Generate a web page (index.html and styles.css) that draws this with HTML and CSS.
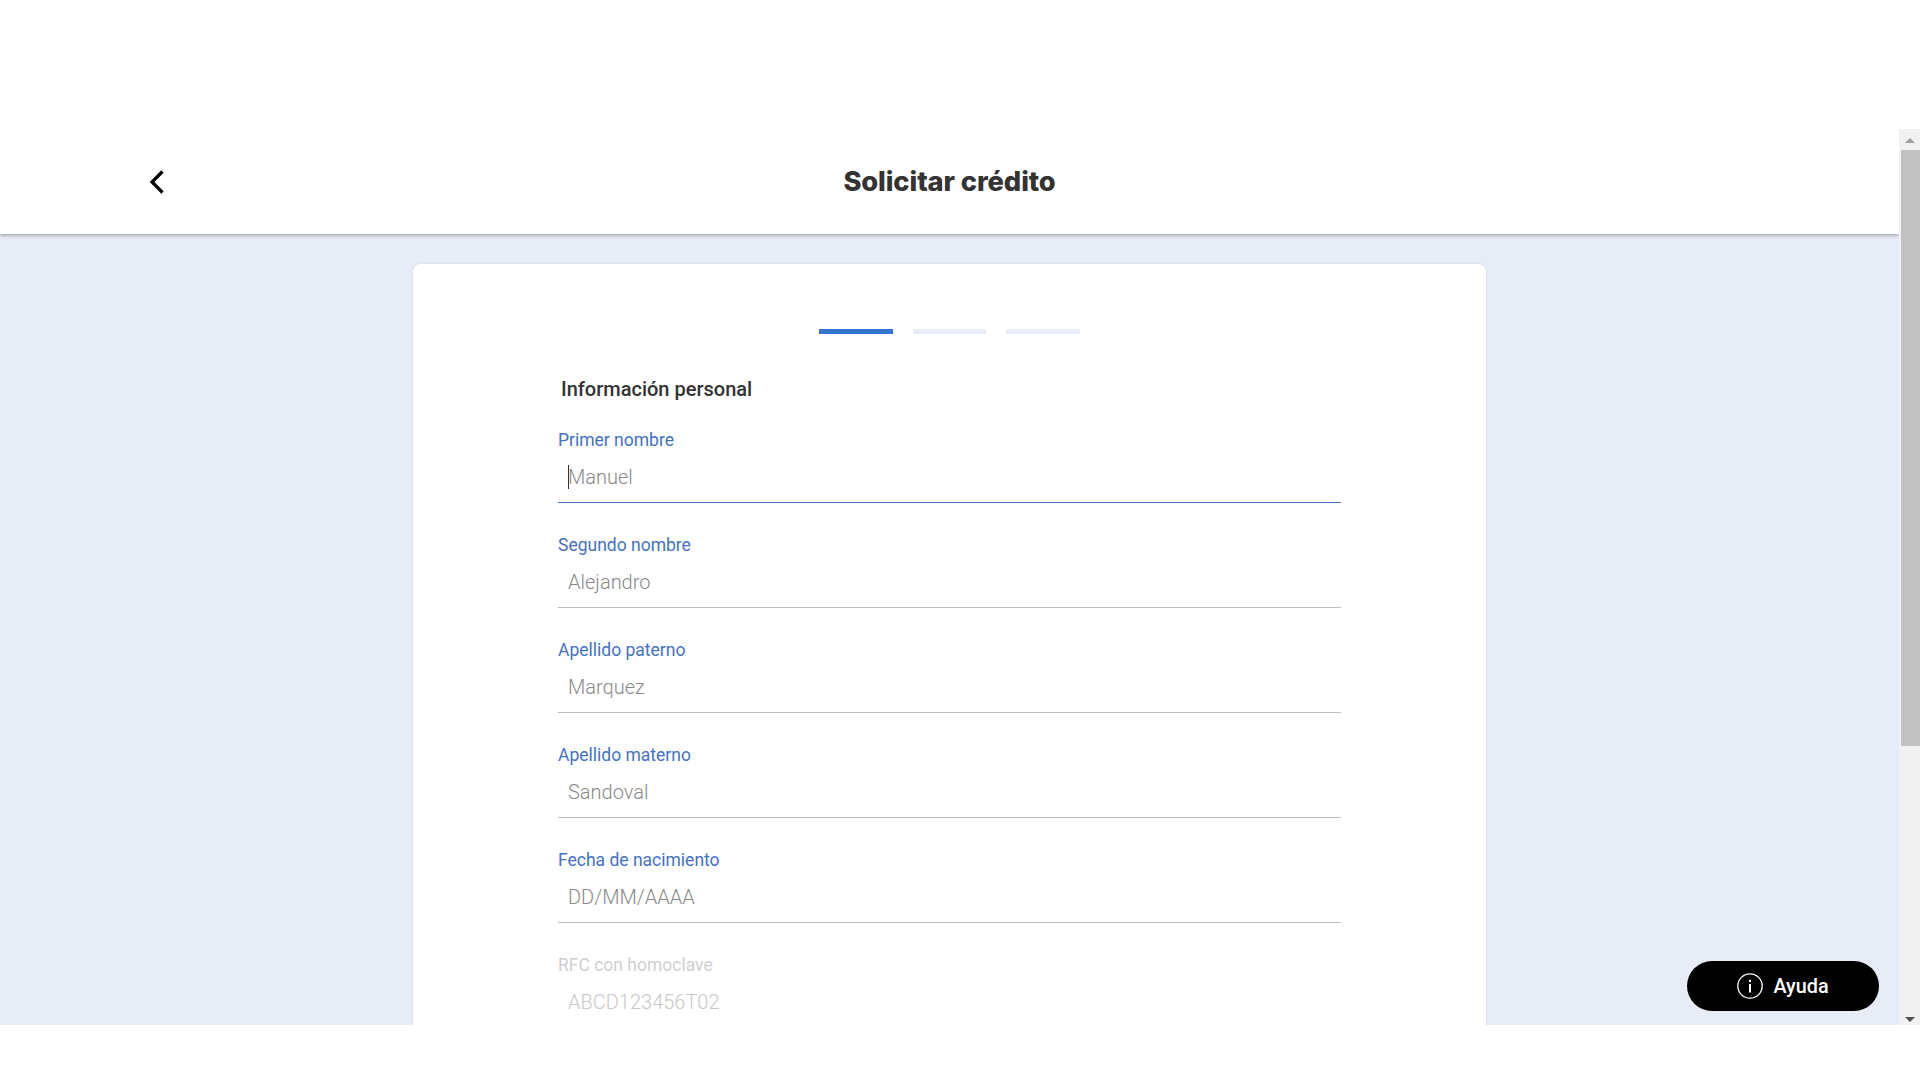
FILE: index.html
```html
<!DOCTYPE html>
<html lang="es">
<head>
<meta charset="utf-8">
<title>Solicitar crédito</title>
<link rel="stylesheet" href="styles.css">
</head>
<body>
<div class="app">
  <div class="gap-top"></div>
  <div class="frame">
    <div class="page">
      <header class="header">
        <button class="back" aria-label="Volver">
          <svg width="20" height="26" viewBox="0 0 20 26"><path d="M15.5 2.500 5 13l10.500 10.500" fill="none" stroke="#000" stroke-width="3.200"/></svg>
        </button>
        <h1 class="title">Solicitar crédito</h1>
      </header>
      <main class="card">
        <div class="steps">
          <span class="step active"></span><span class="step"></span><span class="step"></span>
        </div>
        <form class="form">
          <h2 class="section">Información personal</h2>
          <div class="field focus"><div class="label">Primer nombre</div><div class="value"><span class="caret"></span>Manuel</div></div>
          <div class="field"><div class="label">Segundo nombre</div><div class="value">Alejandro</div></div>
          <div class="field"><div class="label">Apellido paterno</div><div class="value">Marquez</div></div>
          <div class="field"><div class="label">Apellido materno</div><div class="value">Sandoval</div></div>
          <div class="field"><div class="label">Fecha de nacimiento</div><div class="value">DD/MM/AAAA</div></div>
          <div class="field disabled"><div class="label">RFC con homoclave</div><div class="value">ABCD123456T02</div></div>
        </form>
      </main>
    </div>
    <div class="scrollbar">
      <span class="arrow up"></span>
      <span class="thumb"></span>
      <span class="arrow down"></span>
    </div>
    <button class="help">
      <svg width="26" height="26" viewBox="0 0 26 26"><circle cx="13" cy="13" r="12.200" fill="none" stroke="#fff" stroke-width="1.300"/><rect x="12" y="11" width="2" height="8.500" fill="#fff"/><rect x="12" y="6.800" width="2" height="2.200" fill="#fff"/></svg>
      <span>Ayuda</span>
    </button>
  </div>
</div>
</body>
</html>
```
FILE: styles.css
```css
* { box-sizing: border-box; }
html, body { margin: 0; height: 100%; background: #fff; overflow: hidden; }
body { font-family: Roboto, "Liberation Sans", sans-serif; }
.app { height: 1080px; display: flex; flex-direction: column; }
.gap-top { height: 129px; flex: none; }
.frame { height: 896px; flex: none; display: flex; position: relative; overflow: hidden; }
.page { flex: 1; min-width: 0; background: #e8ecf6; overflow: hidden; }
.header {
  height: 105px; background: #fff; display: flex; align-items: center; justify-content: center;
  position: relative; box-shadow: 0 1px 4px rgba(0,0,0,.4);
}
.back {
  position: absolute; left: 147px; top: 40px; padding: 0; border: 0; background: none; display: block; line-height: 0;
}
.title {
  margin: 0; font-family: Inter, sans-serif; font-weight: 800; font-size: 27.300px; color: #333; letter-spacing: -.1px;
}
.card {
  width: 1073px; margin: 30px auto 0; height: 900px; background: #fff; border-radius: 8px;
  padding-top: 65px; box-shadow: 0 0 3px rgba(90,100,130,.18);
}
.steps { display: flex; justify-content: center; gap: 20px; }
.step { width: 73.670px; height: 5px; background: #e9edf6; }
.step.active { background: #3274d2; }
.form { width: 783px; margin: 0 auto; }
.section {
  margin: 43px 0 0 3px; font-size: 20px; line-height: 24px; font-weight: 500; color: #333;
}
.field { height: 105px; display: flex; flex-direction: column; }
.section + .field { margin-top: 27px; }
.label { font-size: 17.500px; line-height: 24px; color: #4472c4; }
.value {
  margin-top: 12px; padding: 0 0 0 10px; height: 39px; line-height: 26px; font-size: 20px; font-weight: 300;
  color: #8a8a8a; border-bottom: 1px solid #bdbdbd; position: relative;
}
.field.focus .value { border-bottom-color: #4472c4; }
.caret { position: absolute; left: 10px; top: 1px; width: 1px; height: 24px; background: #333; }
.field.disabled .label { color: #cfcfcf; }
.field.disabled .value { color: #c8c8c8; }
.scrollbar { width: 21px; flex: none; background: #f1f1f1; position: relative; }
.thumb { position: absolute; left: 2px; right: 0; top: 21px; height: 596px; background: #c1c1c1; }
.arrow { position: absolute; left: 6px; width: 0; height: 0; border-left: 5px solid transparent; border-right: 5px solid transparent; }
.arrow.up { top: 9px; border-bottom: 5px solid #a0a0a0; }
.arrow.down { bottom: 3px; border-top: 5px solid #505050; }
.help {
  position: absolute; left: 1687px; top: 832px; width: 192px; height: 50px; border: 0; border-radius: 25px;
  background: #000; color: #fff; display: flex; align-items: center; justify-content: center; gap: 10px;
  font-family: Roboto, sans-serif; font-size: 19.800px; font-weight: 500; padding: 0;
}
```
